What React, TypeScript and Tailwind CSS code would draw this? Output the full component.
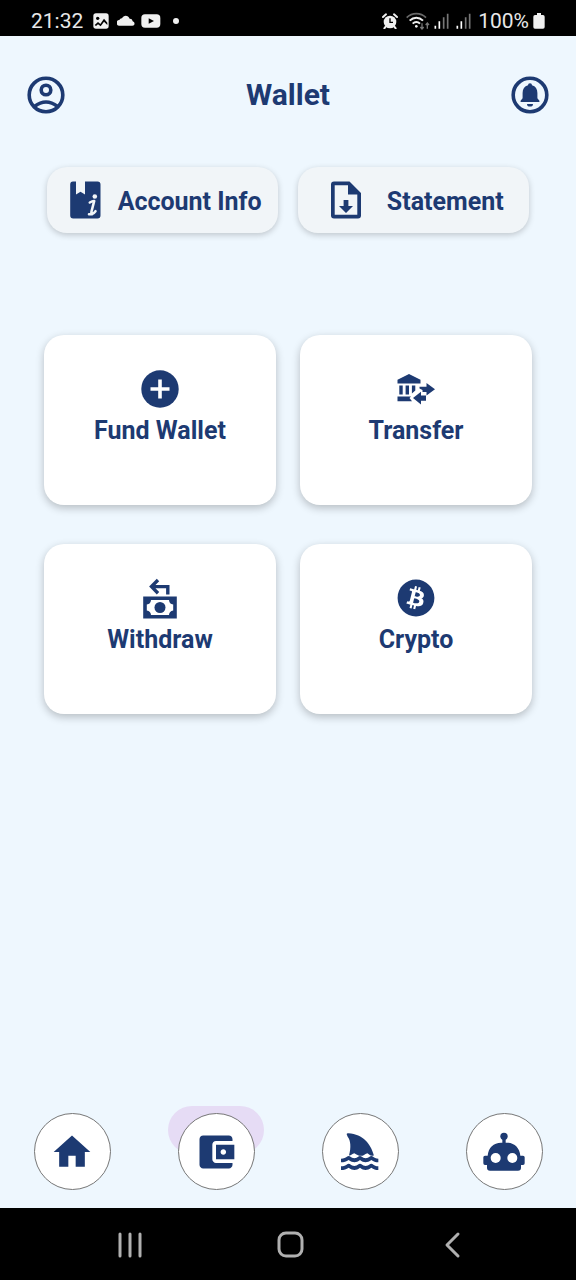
import type { ReactNode } from "react";
import { FaBitcoin } from "react-icons/fa";

function StatusBar() {
  return (
    <div className="flex h-9 shrink-0 items-center justify-between bg-black pt-1.5 pr-[31px] pl-[31px] text-[21px] leading-[30px] text-[#e8e8e8]">
      <div className="flex items-center">
        <span>21:32</span>
        <svg className="ml-2.5 h-4 w-4" viewBox="0 0 48 48" aria-hidden="true">
          <rect x="1" y="1" width="46" height="46" rx="8" fill="#f0f0f0" />
          <circle cx="14" cy="16" r="5" fill="#000" />
          <path d="M5 36l10-9 7 6 11-16 10 12v7l-10-10-10 14-8-6-6 5z" fill="#000" />
        </svg>
        <svg className="ml-2 h-4 w-[18px]" viewBox="0 0 54 48" aria-hidden="true">
          <path d="M8 38a8 8 0 0 1-1-17 8 8 0 0 1 8-5C20 5 34 6 38 17c7 0 8 4 9 8 9 4 6 13-1 13z" fill="#f0f0f0" />
        </svg>
        <svg className="ml-1.5 h-4 w-5" viewBox="0 0 60 48" aria-hidden="true">
          <rect x="1" y="4" width="57" height="40" rx="11" fill="#f0f0f0" />
          <path d="M23 16l16 8-16 8z" fill="#000" />
        </svg>
        <span className="ml-3 h-1.5 w-1.5 rounded-full bg-[#f0f0f0]" />
      </div>
      <div className="flex items-center">
        <svg className="h-4 w-4" viewBox="0 0 48 48" aria-hidden="true">
          <circle cx="24" cy="27" r="19" fill="#f0f0f0" />
          <path d="M3 12l9-8M45 12l-9-8M11 41l-4 5M37 41l4 5" stroke="#f0f0f0" strokeWidth="6" strokeLinecap="round" />
          <path d="M24 16v12h9" stroke="#000" strokeWidth="4" fill="none" />
        </svg>
        <svg className="-mr-0.5 ml-2 h-[18px] w-6" viewBox="0 0 72 54" fill="none" aria-hidden="true">
          <path d="M2 17C18 1 44 1 60 17" stroke="#686868" strokeWidth="5" />
          <path d="M11 26c12-12 28-12 40 0M20 35c7-7 15-7 22 0" stroke="#f0f0f0" strokeWidth="6" />
          <circle cx="31" cy="43" r="4" fill="#f0f0f0" />
          <path d="M48 34v16M43 45l5 6 5-6M64 50V34M59 39l5-6 5 6" stroke="#777" strokeWidth="4" />
        </svg>
        {["first", "second"].map((sim) => (
          <svg key={sim} className="ml-1.5 h-4 w-4" viewBox="0 0 48 48" strokeWidth="5" aria-hidden="true">
            <path d="M4 47v-9M16 47V25" stroke="#fff" />
            <path d="M29 47V13M41 47V2" stroke="#777" />
          </svg>
        ))}
        <span className="ml-1.5">100%</span>
        <svg className="ml-1 h-4 w-3" viewBox="0 0 36 48" aria-hidden="true">
          <path d="M12 0h12v6h6q5 0 5 5v31q0 5-5 5H6q-5 0-5-5V11q0-5 5-5h6z" fill="#f0f0f0" />
        </svg>
      </div>
    </div>
  );
}

function ProfileIcon() {
  return (
    <svg className="h-[38px] w-[38px]" viewBox="0 0 38 38" fill="none" stroke="currentColor" strokeWidth="3.6" aria-hidden="true">
      <circle cx="19" cy="19" r="16.8" />
      <circle cx="19" cy="14" r="4.8" />
      <path d="M7.500 30.500Q19 21.500 30.500 30.500" />
    </svg>
  );
}

function BellIcon() {
  return (
    <svg className="h-[38px] w-[38px]" viewBox="0 0 38 38" aria-hidden="true">
      <circle cx="19" cy="19" r="16.8" fill="none" stroke="currentColor" strokeWidth="3.6" />
      <path
        d="M19 7.2a2 2 0 0 1 2 2c3.600 1 5.400 4 5.400 7.800v5.200l2 2.600v1.200H9.600v-1.200l2-2.600V17c0-3.800 1.800-6.800 5.400-7.800a2 2 0 0 1 2-2zM16 28h6a3 2.600 0 0 1-6 0z"
        fill="currentColor"
      />
    </svg>
  );
}

function AccountInfoIcon() {
  return (
    <svg className="h-[38px] w-[38px]" viewBox="0 0 38 38" aria-hidden="true">
      <path
        d="M10 .5h3v13l4.500-2.800 4.500 2.800V.5h12.500a3 3 0 0 1 3 3v31a3 3 0 0 1-3 3H10.200a3 3 0 0 1-3-3v-31a3 3 0 0 1 2.800-3z"
        fill="currentColor"
      />
      <circle cx="31.800" cy="15.500" r="2.300" fill="#f1f5f8" />
      <path d="M26.800 21.500q3-1.800 4.400-1.500l-2.700 10.500q-.5 2.500 1 2.300 1.300-.4 3-2.600M26 33.300h3" fill="none" stroke="#f1f5f8" strokeWidth="2.600" strokeLinecap="round" strokeLinejoin="round" />
    </svg>
  );
}

function StatementIcon() {
  return (
    <svg className="h-[38px] w-[38px]" viewBox="0 0 38 38" aria-hidden="true">
      <path
        d="M11 .5h15.500L38 12v22.500a3 3 0 0 1-3 3H11a3 3 0 0 1-3-3v-31a3 3 0 0 1 3-3zM11.700 4.200v29.600h22.600V13.500H25V4.200z"
        fill="currentColor"
        fillRule="evenodd"
      />
      <path d="M20.600 19h4.800v6H30l-7 7-7-7h4.600z" fill="currentColor" />
    </svg>
  );
}

function PlusCircleIcon() {
  return (
    <svg className="h-[38px] w-[38px]" viewBox="0 0 38 38" aria-hidden="true">
      <circle cx="19" cy="19" r="18.700" fill="currentColor" />
      <path d="M19 9.500v19M9.500 19h19" stroke="#fff" strokeWidth="3.600" />
    </svg>
  );
}

function TransferIcon() {
  return (
    <svg className="h-[38px] w-[38px]" viewBox="0 0 38 38" fill="currentColor" aria-hidden="true">
      <path d="M12 4L23.500 9.800V13.500H.5V9.800zM2.300 15.500h3.400v9H2.300zM8.600 15.500H12v9H8.600zM14.900 15.500h3.400v5L14.900 23.500zM.5 26.500h13.500L12.500 28l2.500 3.300H.5z" />
      <path d="M22.500 16.800h7V13l8.500 6.300-8.500 6.300V22H25.500v-2L22.500 18.500z" />
      <path d="M16 28l8-6.300v3.800h5v5.300h-5v3.700z" />
    </svg>
  );
}

function WithdrawIcon() {
  return (
    <svg className="h-[42px] w-[38px]" viewBox="0 0 38 42" aria-hidden="true">
      <path d="M17 3l-6.500 6.600L17 16.200M10.500 9.600h16.300v8" fill="none" stroke="currentColor" strokeWidth="3.400" />
      <path
        d="M2.200 19.500h33.600v22H2.200zM10 23a5 5 0 0 1-4.200 4.600v5.800A5 5 0 0 1 10 38h18a5 5 0 0 1 4.200-4.600v-5.800A5 5 0 0 1 28 23z"
        fill="currentColor"
        fillRule="evenodd"
      />
      <circle cx="19" cy="30.500" r="5.500" fill="currentColor" />
    </svg>
  );
}

function HomeIcon() {
  return (
    <svg className="h-11 w-11" viewBox="0 0 24 24" fill="currentColor" aria-hidden="true">
      <path d="M10 20v-6h4v6h5v-8h3L12 3 2 12h3v8z" />
    </svg>
  );
}

function WalletIcon() {
  return (
    <svg className="h-11 w-11" viewBox="0 0 24 24" fill="currentColor" aria-hidden="true">
      <path d="M21 18v1c0 1.100-.9 2-2 2H5c-1.110 0-2-.9-2-2V5c0-1.100.890-2 2-2h14c1.100 0 2 .9 2 2v1h-9c-1.110 0-2 .9-2 2v8c0 1.100.890 2 2 2zm-9-2h10V8H12zm4-2.500c-.830 0-1.500-.670-1.500-1.500s.670-1.500 1.500-1.500 1.500.670 1.500 1.500-.670 1.500-1.500 1.500z" />
    </svg>
  );
}

function SharkIcon() {
  return (
    <svg className="h-11 w-11" viewBox="0 0 132 132" fill="currentColor" aria-hidden="true">
      <path d="M26 13q0-4 5-3.500C76 12 99 44 107 74q1 4-4 3.500c-8-1-10-5-15-8-8 3-12 8-19 8-8 0-13-4-20-8-6 2-9 6-16 7 7-24 5-45-4-56z" />
      <path d="M9 86c8 0 14-3 20-7q3-2 6 0c10 8 18 8 28 0q3-2 6 0c10 8 18 8 28 0q3-2 6 0c6 4 11 7 18 7v11c-9 0-14-2-21-7-12 9-23 9-34 0-11 9-22 9-34 0-7 5-14 7-23 7z" />
      <path d="M9 109c8 0 14-3 20-7q3-2 6 0c10 8 18 8 28 0q3-2 6 0c10 8 18 8 28 0q3-2 6 0c6 4 11 7 18 7v11c-9 0-14-2-21-7-12 9-23 9-34 0-11 9-22 9-34 0-7 5-14 7-23 7z" />
    </svg>
  );
}

function RobotIcon() {
  return (
    <svg className="h-11 w-11" viewBox="0 0 132 132" fill="currentColor" aria-hidden="true">
      <circle cx="66" cy="19" r="11" />
      <path d="M61 26h10v12h4c22 0 38 15 40 39h8q5 0 5 5v18q0 5-5 5h-6v8q0 9-9 9H24q-9 0-9-9v-8H9q-5 0-5-5V82q0-5 5-5h8c2-24 18-39 40-39h4z" />
      <circle cx="41" cy="84" r="15" fill="#fff" />
      <circle cx="91" cy="84" r="15" fill="#fff" />
    </svg>
  );
}

function PillButton({ icon, label }: { icon: ReactNode; label: string }) {
  return (
    <button
      type="button"
      className="flex h-[66px] items-center justify-evenly rounded-[20px] bg-[#f1f5f8] text-[25px] leading-8 font-bold whitespace-nowrap shadow-[0_2px_6px_rgba(0,0,0,0.2)]"
    >
      {icon}
      <span className="pt-1">{label}</span>
    </button>
  );
}

function ActionCard({ icon, label }: { icon: ReactNode; label: string }) {
  return (
    <button
      type="button"
      className="flex h-[170px] flex-col items-center rounded-[20px] bg-white pt-[33px] text-[25px] leading-8 font-bold shadow-[0_3px_8px_rgba(0,0,0,0.24)]"
    >
      <span className="flex h-[42px] items-center justify-center">{icon}</span>
      <span className="mt-[5px]">{label}</span>
    </button>
  );
}

function NavItem({ icon, label, active = false }: { icon: ReactNode; label: string; active?: boolean }) {
  return (
    <a href="#" aria-label={label} aria-current={active ? "page" : undefined} className="relative flex justify-center">
      {active && <span className="absolute -top-[7px] h-12 w-24 rounded-full bg-[#e6dcf5]" />}
      <span className="relative flex h-[77px] w-[77px] items-center justify-center rounded-full border border-[#777] bg-white">
        {icon}
      </span>
    </a>
  );
}

export default function App() {
  return (
    <div className="flex min-h-screen flex-col bg-[#eef7fe] font-[Roboto,sans-serif] text-[#1d3a72]">
      <StatusBar />
      <header className="flex h-[118px] items-center justify-between px-[27px]">
        <button type="button" aria-label="Profile">
          <ProfileIcon />
        </button>
        <h1 className="text-[30px] leading-10 font-bold">Wallet</h1>
        <button type="button" aria-label="Notifications">
          <BellIcon />
        </button>
      </header>
      <main className="flex-1">
        <div className="mt-[13px] grid grid-cols-2 gap-5 px-[47px]">
          <PillButton icon={<AccountInfoIcon />} label="Account Info" />
          <PillButton icon={<StatementIcon />} label="Statement" />
        </div>
        <div className="mt-[102px] grid grid-cols-2 gap-x-6 gap-y-[39px] px-11">
          <ActionCard icon={<PlusCircleIcon />} label="Fund Wallet" />
          <ActionCard icon={<TransferIcon />} label="Transfer" />
          <ActionCard icon={<WithdrawIcon />} label="Withdraw" />
          <ActionCard icon={<FaBitcoin size={38} />} label="Crypto" />
        </div>
      </main>
      <nav className="grid grid-cols-4 pt-8 pb-[18px]" aria-label="Main">
        <NavItem icon={<HomeIcon />} label="Home" />
        <NavItem icon={<WalletIcon />} label="Wallet" active />
        <NavItem icon={<SharkIcon />} label="Shark" />
        <NavItem icon={<RobotIcon />} label="Assistant" />
      </nav>
      <div className="flex h-[72px] shrink-0 items-center justify-between bg-black pr-[109px] pl-[115px] text-[#b0b0b0]">
        <button type="button" aria-label="Recent apps">
          <svg className="h-[30px] w-[30px]" viewBox="0 0 30 30" stroke="currentColor" strokeWidth="3" strokeLinecap="round" aria-hidden="true">
            <path d="M5 5v22M15 5v22M25 5v22" />
          </svg>
        </button>
        <button type="button" aria-label="Home screen">
          <svg className="h-[30px] w-[30px]" viewBox="0 0 30 30" fill="none" stroke="currentColor" strokeWidth="3" aria-hidden="true">
            <rect x="3" y="4" width="23" height="23" rx="7" />
          </svg>
        </button>
        <button type="button" aria-label="Back">
          <svg className="h-[30px] w-[30px]" viewBox="0 0 30 30" fill="none" stroke="currentColor" strokeWidth="3" strokeLinecap="round" strokeLinejoin="round" aria-hidden="true">
            <path d="M21 5L10 16l11 11" />
          </svg>
        </button>
      </div>
    </div>
  );
}
